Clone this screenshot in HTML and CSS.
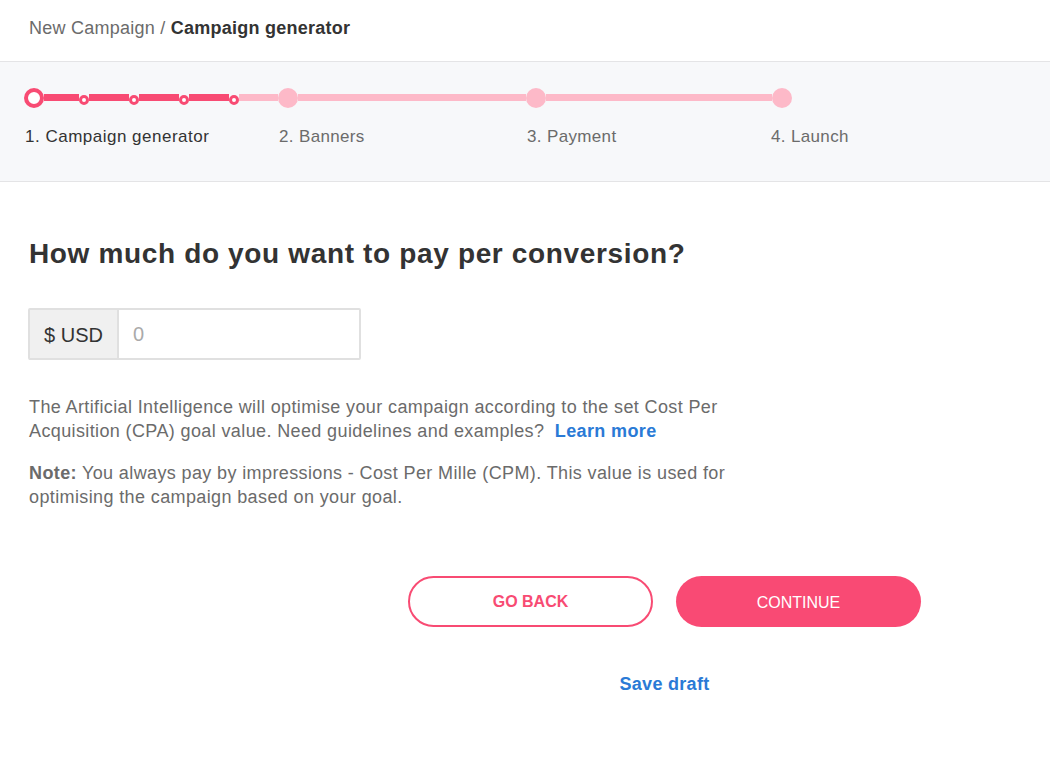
FILE: index.html
```html
<!DOCTYPE html>
<html lang="en">
<head>
<meta charset="utf-8">
<title>Campaign generator</title>
<link rel="stylesheet" href="styles.css">
</head>
<body>
<header class="topbar">
  <nav class="crumbs"><span class="crumb-parent">New Campaign /</span> <span class="crumb-current">Campaign generator</span></nav>
</header>

<section class="stepper">
  <div class="track">
    <span class="node node-current"></span>
    <span class="seg seg-done" style="width:35px"></span>
    <span class="dot"></span>
    <span class="seg seg-done" style="width:40px"></span>
    <span class="dot"></span>
    <span class="seg seg-done" style="width:40px"></span>
    <span class="dot"></span>
    <span class="seg seg-done" style="width:40px"></span>
    <span class="dot"></span>
    <span class="seg seg-todo" style="width:39px"></span>
    <span class="node node-todo"></span>
    <span class="seg seg-todo" style="width:228px"></span>
    <span class="node node-todo"></span>
    <span class="seg seg-todo" style="width:226px"></span>
    <span class="node node-todo"></span>
  </div>
  <ol class="labels">
    <li class="label label-active">1. Campaign generator</li>
    <li class="label">2. Banners</li>
    <li class="label">3. Payment</li>
    <li class="label">4. Launch</li>
  </ol>
</section>

<main class="content">
  <h1 class="title">How much do you want to pay per conversion?</h1>
  <div class="input-group">
    <span class="addon">$ USD</span>
    <input class="amount" type="text" placeholder="0">
  </div>
  <p class="text">The Artificial Intelligence will optimise your campaign according to the set Cost Per Acquisition (CPA) goal value. Need guidelines and examples? <a class="link" href="#">Learn more</a></p>
  <p class="text"><strong class="note">Note:</strong> You always pay by impressions - Cost Per Mille (CPM). This value is used for optimising the campaign based on your goal.</p>

  <div class="actions">
    <div class="buttons">
      <button class="btn btn-outline">GO BACK</button>
      <button class="btn btn-fill">CONTINUE</button>
    </div>
    <a class="save" href="#">Save draft</a>
  </div>
</main>
</body>
</html>
```

FILE: styles.css
```css
* { box-sizing: border-box; }
html, body { margin: 0; padding: 0; background: #fff; }
body {
  font-family: "Liberation Sans", Arial, sans-serif;
  color: #333;
  width: 1050px;
}

.topbar {
  height: 62px;
  border-bottom: 1px solid #e4e4e6;
  display: flex;
  align-items: center;
  padding: 0 29px 4px;
}
.crumbs { font-size: 18px; letter-spacing: 0.25px; }
.crumb-parent { color: #6b6b6b; }
.crumb-current { color: #333; font-weight: 600; }

.stepper {
  background: #f7f8fa;
  height: 120px;
  border-bottom: 1px solid #e4e4e6;
  padding-top: 26px;
}
.track {
  display: flex;
  align-items: center;
  height: 20px;
  padding-left: 24px;
}
.seg { height: 7px; flex: none; margin-top: -1px; }
.seg-done { background: #f84b73; }
.seg-todo { background: #fdb9c8; }
.node {
  width: 20px; height: 20px; border-radius: 50%; flex: none;
}
.node-current { background: #fff; border: 4px solid #f84b73; }
.node-todo { background: #fdb9c8; }
.dot {
  width: 10px; height: 10px; border-radius: 50%; flex: none;
  background: #fff; border: 3px solid #f84b73;
  margin-top: 4px;
}

.labels {
  list-style: none;
  margin: 0;
  padding: 0 0 0 25px;
  display: grid;
  grid-template-columns: 254px 248px 244px auto;
  margin-top: 19px;
}
.label { font-size: 17px; color: #6b6b6b; line-height: 20px; letter-spacing: 0.35px; }
.label-active { color: #333; letter-spacing: 0.5px; }

.content {
  padding: 55px 29px 0;
  width: 950px;
}
.title {
  margin: 0;
  font-size: 28px;
  font-weight: 700;
  color: #333;
  line-height: 34px;
  letter-spacing: 0.65px;
}
.input-group {
  display: flex;
  width: 333px;
  height: 52px;
  margin-top: 37px;
  margin-left: -1px;
  border: 2px solid #e0e0e0;
  border-radius: 2px;
}
.addon {
  flex: none;
  width: 89px;
  white-space: nowrap;
  background: #f0f0f0;
  border-right: 2px solid #e0e0e0;
  font-size: 20px;
  color: #333;
  display: flex;
  align-items: center;
  justify-content: center;
  padding-top: 2px;
}
.amount {
  flex: 1;
  min-width: 0;
  border: 0;
  outline: none;
  font-family: "Liberation Sans", Arial, sans-serif;
  font-size: 20px;
  padding: 0 14px;
  color: #333;
  background: #fff;
}
.amount::placeholder { color: #aaa; font-weight: 300; }

.text {
  width: 730px;
  font-size: 18px;
  line-height: 23.5px;
  letter-spacing: 0.38px;
  color: #6b6b6b;
  margin: 36px 0 0;
}
.text + .text { margin-top: 19px; }
.note { font-weight: 700; color: #6b6b6b; }
.link { color: #2a7ad6; font-weight: 700; text-decoration: none; margin-left: 5px; }

.actions {
  margin-top: 67px;
  margin-left: 379px;
  width: 513px;
  display: flex;
  flex-direction: column;
  align-items: center;
}
.buttons { display: flex; gap: 23px; }
.btn {
  width: 245px;
  height: 51px;
  border-radius: 26px;
  font-family: "Liberation Sans", Arial, sans-serif;
  font-size: 16px;
  cursor: pointer;
}
.btn-outline {
  background: #fff;
  border: 2px solid #f84b73;
  color: #f84b73;
  font-weight: 700;
}
.btn-fill {
  background: #f94a74;
  border: 0;
  color: #fff;
  padding-top: 3px;
}
.save {
  margin-top: 47px;
  font-size: 18px;
  font-weight: 700;
  letter-spacing: 0.3px;
  color: #2a7ad6;
  text-decoration: none;
}
```
